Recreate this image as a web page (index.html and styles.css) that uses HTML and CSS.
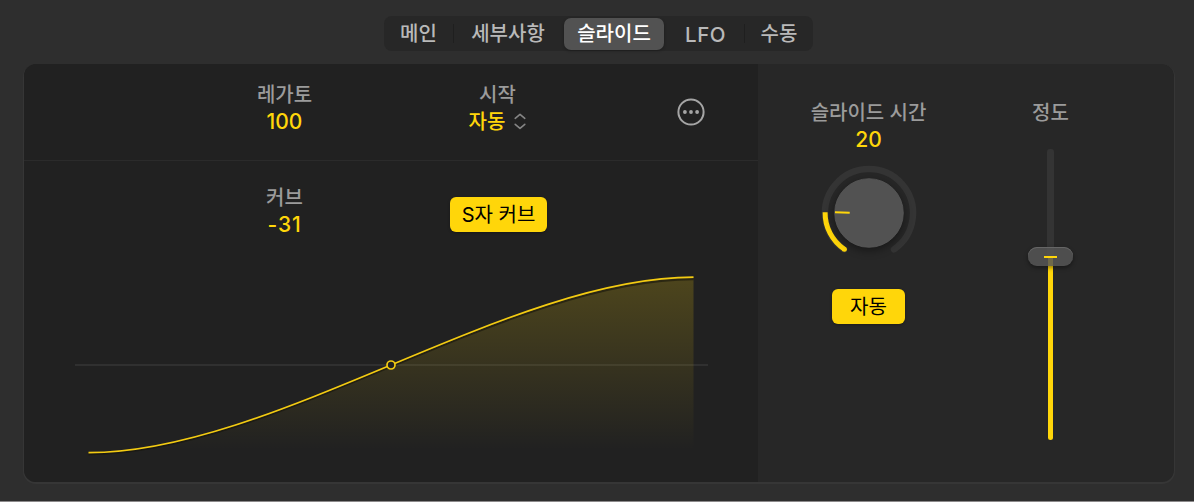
FILE: index.html
```html
<!DOCTYPE html>
<html lang="ko">
<head>
    <meta charset="UTF-8">
    <meta name="viewport" content="width=device-width, initial-scale=1.0">
    <title>슬라이드</title>
    <link rel="stylesheet" href="styles.css">
</head>
<body>
    <div class="window">
        <div class="tabs">
            <div class="tab tab-main">메인</div>
            <div class="divider"></div>
            <div class="tab tab-detail">세부사항</div>
            <div class="tab tab-slide active">슬라이드</div>
            <div class="tab tab-lfo">LFO</div>
            <div class="divider"></div>
            <div class="tab tab-manual">수동</div>
        </div>

        <div class="panel">
            <div class="left">
                <div class="row row-top">
                    <div class="field">
                        <div class="label">레가토</div>
                        <div class="value">100</div>
                    </div>
                    <div class="field">
                        <div class="label">시작</div>
                        <div class="value select">
                            <span>자동</span>
                            <svg width="12" height="18" viewBox="0 0 12 18">
                                <path d="M1.2 5.3 L6 1.3 L10.8 5.3 M1.2 11.3 L6 15.3 L10.8 11.3"/>
                            </svg>
                        </div>
                    </div>
                    <svg class="more" width="28" height="28" viewBox="0 0 28 28">
                        <circle class="ring" cx="14" cy="14" r="12.6"/>
                        <circle cx="7.9" cy="14" r="1.9"/>
                        <circle cx="14" cy="14" r="1.9"/>
                        <circle cx="20.1" cy="14" r="1.9"/>
                    </svg>
                </div>
                <div class="row row-curve">
                    <div class="field">
                        <div class="label">커브</div>
                        <div class="value negative">-31</div>
                    </div>
                    <div class="btn btn-curve">S자 커브</div>
                </div>
                <svg class="curve" width="734" height="220" viewBox="24 262 734 220">
                    <defs>
                        <linearGradient id="fade" gradientUnits="userSpaceOnUse" x1="0" y1="277" x2="0" y2="450">
                            <stop offset="0" stop-color="#ffd60a" stop-opacity="0.2"/>
                            <stop offset="1" stop-color="#ffd60a" stop-opacity="0"/>
                        </linearGradient>
                    </defs>
                    <path class="axis" d="M75 365 H708"/>
                    <path fill="url(#fade)" d="M88.5 452.7 C272.5 452.7 509.5 277.2 693.5 277.2 V452.7 Z"/>
                    <path class="curve-shadow" d="M88.5 454.2 C272.5 454.2 509.5 279.2 693.5 279.2"/>
                    <path class="curve-line" d="M88.5 452.7 C272.5 452.7 509.5 277.2 693.5 277.2"/>
                    <circle class="handle" cx="391" cy="365" r="4"/>
                </svg>
            </div>

            <div class="right">
                <div class="col col-time">
                    <div class="label">슬라이드 시간</div>
                    <div class="value">20</div>
                    <svg class="knob" width="120" height="120" viewBox="-60 -60 120 120">
                        <path class="knob-track" d="M-25 36.3 A44 44 0 1 1 25 36.3"/>
                        <path class="knob-value" d="M-24.6 36.3 A43.9 43.9 0 0 1 -43.9 -0.8"/>
                        <path class="knob-cap" d="M-24.6 36.3 h0.01"/>
                        <circle class="knob-body" cx="0" cy="0" r="34.3"/>
                        <path class="knob-mark" d="M-34 -0.7 L-19.3 -0.2"/>
                    </svg>
                    <div class="btn btn-auto">자동</div>
                </div>
                <div class="col col-amount">
                    <div class="label">정도</div>
                    <div class="slider">
                        <div class="track"></div>
                        <div class="fill"></div>
                        <div class="thumb"><div class="mark"></div></div>
                    </div>
                </div>
            </div>
        </div>
    </div>
</body>
</html>
```

FILE: styles.css
```css
body {
    margin: 0;
    background-color: #fff;
    font-family: Inter, "Noto Sans CJK KR", sans-serif;
    font-size: 20px;
    font-weight: 500;
    color: #9b9b9b;
}
.window {
    box-sizing: border-box;
    height: 502px;
    padding: 16px 20px 0 24px;
    background-color: #2e2e2e;
    border-bottom: 1px solid #8c8a8b;
    overflow: hidden;
}

.tabs {
    display: flex;
    align-items: center;
    width: 429px;
    height: 35px;
    margin-left: 360px;
    border-radius: 8px;
    background-color: #272727;
    color: #b9b9b9;
}
.tab {
    height: 32px;
    line-height: 33px;
    text-align: center;
    white-space: nowrap;
    border-radius: 7px;
}
.tab-main {
    width: 69px;
}
.tab-detail {
    box-sizing: border-box;
    width: 110px;
    padding-right: 2px;
}
.tab-slide {
    width: 100px;
}
.tab-lfo {
    box-sizing: border-box;
    width: 80px;
    padding-left: 3px;
    font-size: 20.5px;
    letter-spacing: 0.5px;
}
.tab-manual {
    width: 68px;
}
.active {
    background-color: #525252;
    color: #fff;
    box-shadow: 0 1px 3px rgba(0, 0, 0, 0.3);
}
.divider {
    width: 1px;
    height: 19px;
    background-color: #1f1f1f;
}

.panel {
    display: flex;
    width: 1150px;
    height: 418px;
    margin-top: 13px;
    border-radius: 12px;
    background-color: #272727;
    box-shadow: 0 1px 0 1px #363636;
    overflow: hidden;
}
.left {
    width: 734px;
    background-color: #212121;
}
.row {
    display: grid;
    grid-template-columns: 213px 213px 1fr;
    box-sizing: border-box;
    padding-left: 154px;
}
.row-top {
    height: 97px;
    padding-top: 16px;
    border-bottom: 1px solid #2b2b2b;
}
.row-curve {
    height: 101px;
    padding-top: 22px;
}
.field {
    text-align: center;
}
.label,
.value {
    height: 28px;
    line-height: 28px;
    white-space: nowrap;
}
.label {
    line-height: 30px;
    color: #9b9b9b;
}
.value {
    font-size: 21px;
    color: #ffd60a;
}
.negative {
    letter-spacing: 0.8px;
}
.select {
    display: flex;
    justify-content: center;
    align-items: center;
    gap: 9px;
    font-size: 20px;
}
.select svg {
    fill: none;
    stroke: #858585;
    stroke-width: 1.6;
    stroke-linecap: round;
    stroke-linejoin: round;
}
.more {
    margin: 18px 0 0 73px;
    fill: #a5a5a5;
}
.more .ring {
    fill: none;
    stroke: #a5a5a5;
    stroke-width: 2;
}
.btn {
    height: 35px;
    line-height: 37px;
    border-radius: 6px;
    background-color: #ffd60a;
    color: #000;
    font-weight: 400;
    text-align: center;
    box-shadow: 0 1px 3px rgba(0, 0, 0, 0.3);
}
.btn-curve {
    width: 97px;
    margin: 14px 0 0 59px;
}
.btn-auto {
    width: 73px;
}

.curve {
    display: block;
    fill: none;
}
.axis {
    stroke: #363636;
    stroke-width: 1.5;
}
.curve-shadow {
    stroke: #16140c;
    stroke-opacity: 0.6;
    stroke-width: 2;
}
.curve-line {
    stroke: #f3cb12;
    stroke-width: 1.7;
}
.handle {
    fill: #212121;
    stroke: #f3cb12;
    stroke-width: 1.7;
}

.right {
    display: flex;
    width: 416px;
    padding-top: 34px;
}
.col {
    display: flex;
    flex-direction: column;
    align-items: center;
}
.col-time {
    width: 221px;
}
.col-amount {
    width: 143px;
}
.knob {
    margin: -1px 0 16px;
    fill: none;
}
.knob-track {
    stroke: #343434;
    stroke-width: 6.5;
    stroke-linecap: round;
}
.knob-value {
    stroke: #ffd60a;
    stroke-width: 5;
}
.knob-cap {
    stroke: #ffd60a;
    stroke-width: 5;
    stroke-linecap: round;
}
.knob-body {
    fill: #525252;
    stroke: #595959;
    stroke-width: 0.8;
    filter: drop-shadow(0 3px 4px rgba(0, 0, 0, 0.4));
}
.knob-mark {
    stroke: #ffd60a;
    stroke-width: 2;
}

.slider {
    position: relative;
    display: flex;
    flex-direction: column;
    align-items: center;
    width: 45px;
    margin-top: 23px;
}
.track {
    width: 7px;
    height: 108px;
    border-radius: 3px 3px 0 0;
    background-color: #343434;
}
.fill {
    width: 5px;
    height: 183px;
    border-radius: 0 0 3px 3px;
    background-color: #ffd60a;
}
/* sits over the track at the current amount */
.thumb {
    position: absolute;
    top: 98px;
    left: 0;
    display: flex;
    justify-content: center;
    align-items: center;
    width: 45px;
    height: 19px;
    border-radius: 9px;
    background-color: rgba(86, 86, 86, 0.85);
    box-shadow: 0 2px 4px rgba(0, 0, 0, 0.4), inset 0 1px 0 #666;
}
.mark {
    width: 13px;
    height: 2px;
    background-color: #ffd60a;
}
```
